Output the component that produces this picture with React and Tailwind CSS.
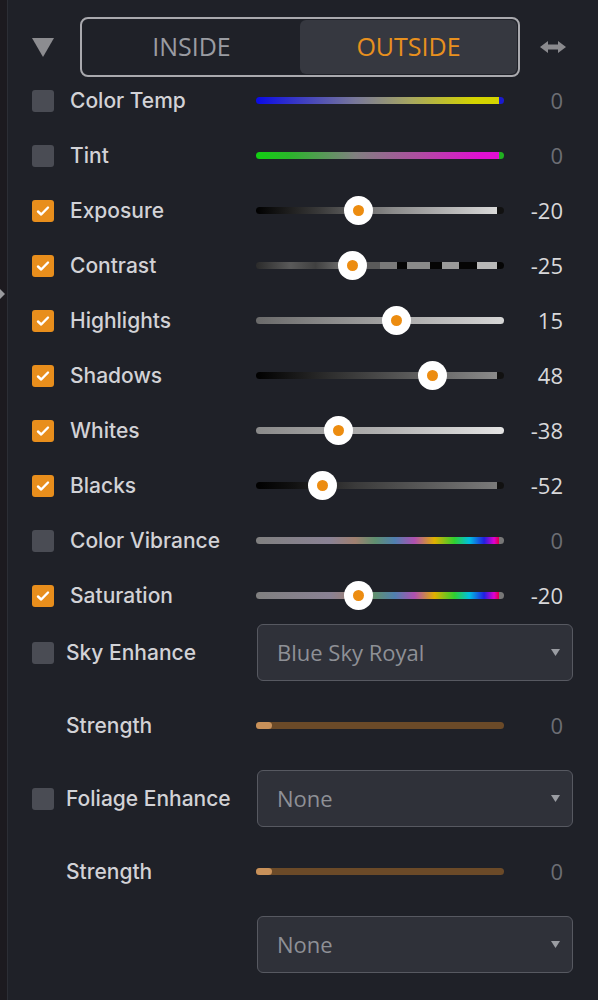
import React from "react";

const sliders = [
  {
    name: "Color Temp",
    checked: false,
    value: 0,
    track:
      "bg-[linear-gradient(to_right,#0a0ae6_0%,#3434c8_15%,#78789a_40%,#a6a662_62%,#d4d400_88%,#d4d400_98%,#1a1ad0_98%)]",
  },
  {
    name: "Tint",
    checked: false,
    value: 0,
    track:
      "bg-[linear-gradient(to_right,#12d012_0%,#2cb42c_14%,#808080_40%,#b04ca2_66%,#e010d2_90%,#e010d2_98%,#20b020_98%)]",
  },
  {
    name: "Exposure",
    checked: true,
    value: -20,
    track:
      "bg-[linear-gradient(to_right,#000_0%,#383838_25%,#8a8a8a_55%,#d8d8d8_97%,#111_97%)]",
  },
  {
    name: "Contrast",
    checked: true,
    value: -25,
    track:
      "bg-[linear-gradient(to_right,#2b2b2b_0%,#5a5a5a_14%,#404040_24%,#6a6a6a_34%,#4a4a4a_44%,#5a5a5a_45%,#5a5a5a_50%,#7a7a7a_50%,#7a7a7a_57%,#050505_57%,#050505_61%,#8a8a8a_61%,#8a8a8a_70%,#050505_70%,#050505_75%,#9a9a9a_75%,#9a9a9a_82%,#050505_82%,#050505_89%,#b8b8b8_89%,#b8b8b8_97%,#050505_97%)]",
  },
  {
    name: "Highlights",
    checked: true,
    value: 15,
    track:
      "bg-[linear-gradient(to_right,#6a6a6a_0%,#a0a0a0_50%,#d6d6d6_100%)]",
  },
  {
    name: "Shadows",
    checked: true,
    value: 48,
    track:
      "bg-[linear-gradient(to_right,#000_0%,#2e2e2e_30%,#8a8a8a_97%,#111_97%)]",
  },
  {
    name: "Whites",
    checked: true,
    value: -38,
    track:
      "bg-[linear-gradient(to_right,#8a8a8a_0%,#b0b0b0_50%,#e4e4e4_100%)]",
  },
  {
    name: "Blacks",
    checked: true,
    value: -52,
    track:
      "bg-[linear-gradient(to_right,#000_0%,#111_15%,#3a3a3a_40%,#7a7a7a_97%,#111_97%)]",
  },
  {
    name: "Color Vibrance",
    checked: false,
    value: 0,
    track:
      "bg-[linear-gradient(to_right,#808080_0%,#8a8294_30%,#a08070_40%,#609070_48%,#5080b0_56%,#b050b0_64%,#e0b000_72%,#30d030_80%,#00c0e0_86%,#2020e0_92%,#e000d0_96%,#e00040_98%,#777_98%)]",
  },
  {
    name: "Saturation",
    checked: true,
    value: -20,
    track:
      "bg-[linear-gradient(to_right,#808080_0%,#8a8294_30%,#a08070_40%,#609070_48%,#5080b0_56%,#b050b0_64%,#e0b000_72%,#30d030_80%,#00c0e0_86%,#2020e0_92%,#e000d0_96%,#e00040_98%,#777_98%)]",
  },
];

const Checkbox = ({ checked }) =>
  checked ? (
    <div className="w-[22px] h-[22px] rounded-[3px] bg-[#e88e1c] flex items-center justify-center shrink-0">
      <svg width="14" height="12" viewBox="0 0 14 12" fill="none">
        <path
          d="M2 6.5l3.2 3L12 2.5"
          stroke="#fff"
          strokeWidth="2.4"
          strokeLinecap="round"
          strokeLinejoin="round"
        />
      </svg>
    </div>
  ) : (
    <div className="w-[22px] h-[22px] rounded-[3px] bg-[#4a4c54] shrink-0" />
  );

const Caret = () => (
  <svg width="9" height="7" viewBox="0 0 9 7">
    <polygon points="0,0 9,0 4.5,7" fill="#9a9ca2" />
  </svg>
);

const Dropdown = ({ text }) => (
  <div className="w-[316px] h-[57px] rounded-[6px] bg-[#2f3139] border border-[#575961] flex items-center justify-between pl-[19px] pr-[12px]">
    <span className="text-[22px] text-[#8e9096] font-['Open_Sans',sans-serif]">
      {text}
    </span>
    <Caret />
  </div>
);

const StrengthRow = () => (
  <div className="flex items-center h-[55px] my-[17px]">
    <div className="w-[248px] pl-[58px] text-[21px] font-medium text-[#d2d2d6] font-['Inter',sans-serif]">
      Strength
    </div>
    <div className="relative w-[248px] h-[7px] rounded-full bg-[#6b4a28]">
      <div className="absolute left-0 top-0 w-[16px] h-[7px] rounded-full bg-[#c8915a]" />
    </div>
    <div className="w-[59px] text-right text-[22px] text-[#6c6e74] font-['Open_Sans',sans-serif]">
      0
    </div>
  </div>
);

export default function App() {
  return (
    <div className="w-[598px] h-[1000px] flex bg-[#1f2128] overflow-hidden">
      {/* left edge strip */}
      <div className="relative w-[7px] h-full bg-[#1c1a1f]">
        <svg
          className="absolute left-0 top-[289px]"
          width="5"
          height="10"
          viewBox="0 0 5 10"
        >
          <polygon points="0,0 5,5 0,10" fill="#9a9a9e" />
        </svg>
      </div>
      <div className="w-px h-full bg-[#2c2e35]" />

      <div className="flex-1 flex flex-col">
        {/* header */}
        <div className="flex items-start h-[73px] pt-[17px]">
          <div className="w-[72px] h-[60px] flex items-center pl-[24px]">
            <svg width="22" height="19" viewBox="0 0 22 19">
              <polygon points="0,0 22,0 11,19" fill="#8c8c90" />
            </svg>
          </div>
          <div className="w-[440px] h-[60px] rounded-[8px] border-2 border-[#a9a9ae] flex p-px">
            <div className="flex-1 flex items-center justify-center text-[25px] text-[#9a9ca2] font-['Open_Sans',sans-serif]">
              INSIDE
            </div>
            <div className="flex-1 flex items-center justify-center rounded-[6px] bg-[#363840] text-[25px] text-[#e8901e] font-['Open_Sans',sans-serif]">
              OUTSIDE
            </div>
          </div>
          <div className="h-[60px] flex items-center pl-[20px]">
            <svg width="26" height="14" viewBox="0 0 26 14">
              <polygon
                points="0,7 8,1 8,4.5 18,4.5 18,1 26,7 18,13 18,9.5 8,9.5 8,13"
                fill="#8a8a8e"
              />
            </svg>
          </div>
        </div>

        {/* slider rows */}
        {sliders.map((s) => (
          <div key={s.name} className="flex items-center h-[55px]">
            <div className="w-[248px] flex items-center pl-[24px]">
              <Checkbox checked={s.checked} />
              <span className="ml-[16px] text-[21px] font-medium text-[#d2d2d6] font-['Inter',sans-serif]">
                {s.name}
              </span>
            </div>
            <div className={`relative w-[248px] h-[7px] rounded-full ${s.track}`}>
              {s.checked && (
                <div
                  className="absolute top-1/2 w-[29px] h-[29px] -ml-[14.5px] -mt-[14.5px] rounded-full bg-white flex items-center justify-center"
                  style={{ left: 124 + s.value * 1.1 }}
                >
                  <div className="w-[11px] h-[11px] rounded-full bg-[#ec8c10]" />
                </div>
              )}
            </div>
            <div
              className={`w-[59px] text-right text-[22px] font-['Open_Sans',sans-serif] ${
                s.checked ? "text-[#d8d8da]" : "text-[#6c6e74]"
              }`}
            >
              {s.value}
            </div>
          </div>
        ))}

        {/* sky enhance */}
        <div className="flex items-center h-[57px] mt-px">
          <div className="w-[249px] flex items-center pl-[24px]">
            <Checkbox checked={false} />
            <span className="ml-[12px] text-[21px] font-medium text-[#d2d2d6] font-['Inter',sans-serif]">
              Sky Enhance
            </span>
          </div>
          <Dropdown text="Blue Sky Royal" />
        </div>
        <StrengthRow />

        {/* foliage enhance */}
        <div className="flex items-center h-[57px]">
          <div className="w-[249px] flex items-center pl-[24px]">
            <Checkbox checked={false} />
            <span className="ml-[12px] text-[21px] font-medium text-[#d2d2d6] font-['Inter',sans-serif]">
              Foliage Enhance
            </span>
          </div>
          <Dropdown text="None" />
        </div>
        <StrengthRow />

        <div className="flex items-center h-[57px]">
          <div className="w-[249px]" />
          <Dropdown text="None" />
        </div>
      </div>
    </div>
  );
}
